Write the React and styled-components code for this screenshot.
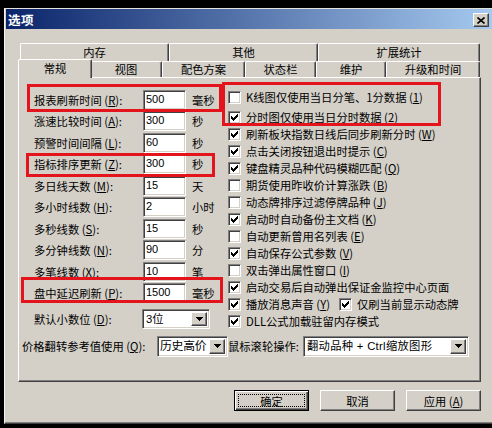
import React from 'react';
import styled, { createGlobalStyle } from 'styled-components';

const GlobalStyle = createGlobalStyle`
  html, body { margin: 0; padding: 0; background: #000; overflow: hidden; }
  body { width: 492px; height: 428px; font-family: "Noto Sans CJK SC", sans-serif; color: #000; }
`;

const Dialog = styled.div`
  margin: 8px 0 0 4px; width: 492px; height: 416px; box-sizing: border-box;
  background: #d4d0c8; padding: 0 1px 0 1px;
  border-top: 1px solid #e4e2dc; border-left: 1px solid #f4f4f4;
  border-bottom: 1px solid #404040;
  box-shadow: inset 0 -1px #808080;
`;
const TitleBar = styled.div`
  height: 20px; display: flex; align-items: center; justify-content: space-between;
  background: linear-gradient(to right, #0a246a, #a6caf0);
  padding: 0 6px 0 2px;
`;
const TitleText = styled.span`
  color: #fff; font-weight: bold; font-size: 12.5px; letter-spacing: 0.5px;
`;
const CloseBtn = styled.div`
  width: 16px; height: 14px; box-sizing: border-box; margin-top: 2px;
  background: #d4d0c8; border: 1px solid; border-color: #fff #404040 #404040 #fff;
  box-shadow: inset -1px -1px #808080;
  display: flex; align-items: center; justify-content: center;
`;
const Body = styled.div`
  padding: 14px 0 0 12px;
`;
const TabStrip = styled.div`
  margin-left: 2px; width: 460px;
`;
const TabRow = styled.div`
  display: flex; align-items: flex-start; height: ${p => p.$h}px;
`;
const Tab = styled.div`
  position: relative; z-index: ${p => (p.$active ? 2 : 0)};
  width: ${p => p.$w + (p.$active ? 4 : 0)}px; box-sizing: border-box; flex: none;
  height: ${p => (p.$active ? 19 : p.$h)}px;
  margin: ${p => (p.$active ? '-2px -2px 0 -2px' : '0')};
  padding-bottom: ${p => (p.$active ? 3 : 1)}px;
  background: #d4d0c8;
  border-top: 1px solid #fff; border-left: 1px solid #fff; border-right: 1px solid #404040;
  box-shadow: inset -1px 0 #808080;
  border-radius: 2px 2px 0 0;
  display: flex; align-items: center; justify-content: center;
  font-size: 11.3px; line-height: 14px;
`;
const Panel = styled.div`
  position: relative; width: 463px; height: 305px; box-sizing: border-box;
  border: 1px solid; border-color: #fff #404040 #404040 #fff;
  box-shadow: inset -1px -1px #808080;
`;
const Columns = styled.div`
  display: flex;
`;
const LeftCol = styled.div`
  width: 209px; box-sizing: border-box; padding: 12px 0 0 15px;
  display: grid; grid-template-columns: 109px 43px auto; grid-auto-rows: 21.44px;
  align-items: start;
`;
const Label = styled.span`
  font-size: 11.3px; line-height: 20px; white-space: nowrap;
  margin-top: ${p => p.$mt || 0}px;
`;
const Unit = styled(Label)`
  margin-left: 6px;
`;
const U = styled.span`
  text-decoration: underline;
`;
const Field = styled.div`
  width: 43px; height: 20px; box-sizing: border-box; background: #fff;
  border: 1px solid; border-color: #808080 #fff #fff #808080;
  box-shadow: inset 1px 1px #404040, inset -1px -1px #d4d0c8;
  font-family: "Liberation Sans", "Noto Sans CJK SC", sans-serif; font-size: 11px;
  line-height: 17px; padding-left: 2px;
`;
const SelectBox = styled.div`
  width: ${p => p.$w}px; height: ${p => p.$h || 20}px; box-sizing: border-box; background: #fff;
  border: 1px solid; border-color: #808080 #fff #fff #808080;
  box-shadow: inset 1px 1px #404040, inset -1px -1px #d4d0c8;
  padding: 2px; display: flex; align-items: stretch; flex: none;
  ${p => p.$shift && 'margin-top: 4.6px; margin-left: -1px; grid-column: 2 / span 2;'}
`;
const SelectText = styled.span`
  flex: 1; font-family: "Liberation Sans", "Noto Sans CJK SC", sans-serif;
  font-size: ${p => p.$fs || 11.3}px; line-height: 15px; padding-left: ${p => p.$pl ?? 1}px;
  white-space: nowrap; overflow: hidden; letter-spacing: ${p => p.$ls || 0}px;
`;
const DropBtn = styled.span`
  width: 16px; flex: none; box-sizing: border-box; background: #d4d0c8;
  border: 1px solid; border-color: #fff #404040 #404040 #fff;
  box-shadow: inset -1px -1px #808080;
  display: flex; align-items: center; justify-content: center;
`;
const RightCol = styled.div`
  padding-top: 10.5px; display: flex; flex-direction: column;
`;
const CheckRow = styled.div`
  height: 17px; display: flex; align-items: center; gap: 5px;
  margin-bottom: ${p => (p.$gap ? 3 : 0)}px;
  font-size: 11.3px; white-space: nowrap;
`;
const Box = styled.span`
  width: 13px; height: 13px; box-sizing: border-box; flex: none; background: #fff;
  border: 1px solid; border-color: #808080 #fff #fff #808080;
  box-shadow: inset 1px 1px #404040, inset -1px -1px #d4d0c8;
  display: flex; align-items: center; justify-content: center;
  margin-left: ${p => p.$ml || 0}px;
`;
const BottomRow = styled.div`
  display: flex; align-items: center; margin: 6px 0 0 3px; height: 21px;
`;
const RowLabel = styled.span`
  width: ${p => p.$w}px; font-size: 11.3px; white-space: nowrap; flex: none;
`;
const RedBox = styled.div`
  position: absolute; border: 3px solid #e3141c; box-sizing: border-box; pointer-events: none;
`;
const ButtonRow = styled.div`
  width: 463px; margin-top: 8px; display: flex; justify-content: flex-end; gap: 11px;
`;
const Button = styled.div`
  width: 75px; height: 21px; box-sizing: border-box; background: #d4d0c8;
  border: 1px solid; border-color: ${p => (p.$default ? '#000' : '#fff #404040 #404040 #fff')};
  box-shadow: ${p => (p.$default
    ? 'inset 1px 1px #fff, inset -1px -1px #404040, inset -2px -2px #808080'
    : 'inset -1px -1px #808080')};
  display: flex; align-items: center; justify-content: center; font-size: 11.3px;
  padding: 3px;
`;
const Focus = styled.span`
  flex: 1; align-self: stretch; border: 1px dotted #000; display: flex;
  align-items: center; justify-content: center;
`;

const Check = () => (
  <svg width="7" height="7" viewBox="0 0 7 7" shapeRendering="crispEdges">
    {[2, 3, 4, 3, 2, 1, 0].map((t, i) => <rect key={i} x={i} y={t} width="1" height="3" fill="#000" />)}
  </svg>
);
const Arrow = () => (
  <svg width="7" height="4" viewBox="0 0 7 4" shapeRendering="crispEdges">
    <rect x="0" y="0" width="7" height="1" /><rect x="1" y="1" width="5" height="1" />
    <rect x="2" y="2" width="3" height="1" /><rect x="3" y="3" width="1" height="1" />
  </svg>
);

const leftRows = [
  ['报表刷新时间', 'R', '500', '毫秒'],
  ['涨速比较时间', 'A', '300', '秒'],
  ['预警时间间隔', 'L', '60', '秒'],
  ['指标排序更新', 'Z', '300', '秒'],
  ['多日线天数', 'M', '15', '天'],
  ['多小时线数', 'H', '2', '小时'],
  ['多秒线数', 'S', '15', '秒'],
  ['多分钟线数', 'N', '90', '分'],
  ['多笔线数', 'X', '10', '笔'],
  ['盘中延迟刷新', 'P', '1500', '毫秒'],
];

const checks = [
  ['K线图仅使用当日分笔、1分数据', '1', false],
  ['分时图仅使用当日分时数据', '2', true],
  ['刷新板块指数日线后同步刷新分时', 'W', true],
  ['点击关闭按钮退出时提示', 'C', true],
  ['键盘精灵品种代码模糊匹配', 'Q', true],
  ['期货使用昨收价计算涨跌', 'B', false],
  ['动态牌排序过滤停牌品种', 'J', false],
  ['启动时自动备份主文档', 'K', true],
  ['自动更新曾用名列表', 'E', false],
  ['自动保存公式参数', 'V', true],
  ['双击弹出属性窗口', 'I', false],
  ['启动交易后自动弹出保证金监控中心页面', null, true],
];

const topTabs = [['内存', 149], ['其他', 149], ['扩展统计', 162]];
const mainTabs = [['常规', 70], ['视图', 72], ['配色方案', 83], ['状态栏', 71], ['维护', 70], ['升级和时间', 94]];

const Mn = ({ k }) => (k ? <> (<U>{k}</U>)</> : null);

export default function App() {
  return (
    <>
      <GlobalStyle />
      <Dialog>
        <TitleBar>
          <TitleText>选项</TitleText>
          <CloseBtn>
            <svg width="8" height="7" viewBox="0 0 8 7">
              <path d="M0.5 0.5 L7.5 6.5 M7.5 0.5 L0.5 6.5" stroke="#000" strokeWidth="1.6" />
            </svg>
          </CloseBtn>
        </TitleBar>
        <Body>
          <TabStrip>
            <TabRow $h={18}>
              {topTabs.map(([t, w]) => <Tab key={t} $w={w} $h={18}>{t}</Tab>)}
            </TabRow>
            <TabRow $h={16}>
              {mainTabs.map(([t, w], i) => <Tab key={t} $w={w} $h={16} $active={i === 0}>{t}</Tab>)}
            </TabRow>
          </TabStrip>
          <Panel>
            <Columns>
              <LeftCol>
                {leftRows.map(([l, k, v, u]) => (
                  <React.Fragment key={l}>
                    <Label>{l}<Mn k={k} />:</Label>
                    <Field>{v}</Field>
                    <Unit>{u}</Unit>
                  </React.Fragment>
                ))}
                <Label $mt={4.6}>默认小数位<Mn k="D" />:</Label>
                <SelectBox $w={68} $shift>
                  <SelectText>3位</SelectText>
                  <DropBtn><Arrow /></DropBtn>
                </SelectBox>
              </LeftCol>
              <RightCol>
                {checks.map(([t, k, on], i) => (
                  <CheckRow key={t} $gap={i === 0}>
                    <Box>{on && <Check />}</Box>
                    <span>{t}<Mn k={k} /></span>
                  </CheckRow>
                ))}
                <CheckRow>
                  <Box><Check /></Box>
                  <span>播放消息声音<Mn k="Y" /></span>
                  <Box $ml={4}><Check /></Box>
                  <span>仅刷当前显示动态牌</span>
                </CheckRow>
                <CheckRow>
                  <Box><Check /></Box>
                  <span>DLL公式加载驻留内存模式</span>
                </CheckRow>
              </RightCol>
            </Columns>
            <BottomRow>
              <RowLabel $w={135}>价格翻转参考值使用<Mn k="Q" />:</RowLabel>
              <SelectBox $w={71} $h={21}>
                <SelectText $fs={11.8} $pl={0} $ls={-0.2}>历史高价</SelectText>
                <DropBtn><Arrow /></DropBtn>
              </SelectBox>
              <RowLabel $w={75}>鼠标滚轮操作:</RowLabel>
              <SelectBox $w={166} $h={21}>
                <SelectText $ls={0.3}>翻动品种 + Ctrl缩放图形</SelectText>
                <DropBtn><Arrow /></DropBtn>
              </SelectBox>
            </BottomRow>
            <RedBox style={{ left: 8, top: 6, width: 195, height: 28 }} />
            <RedBox style={{ left: 7, top: 75, width: 189, height: 24 }} />
            <RedBox style={{ left: 2, top: 199, width: 202, height: 26 }} />
            <RedBox style={{ left: 203, top: 4, width: 219, height: 44 }} />
          </Panel>
          <ButtonRow>
            <Button $default><Focus>确定</Focus></Button>
            <Button>取消</Button>
            <Button>应用 (<U>A</U>)</Button>
          </ButtonRow>
        </Body>
      </Dialog>
    </>
  );
}
